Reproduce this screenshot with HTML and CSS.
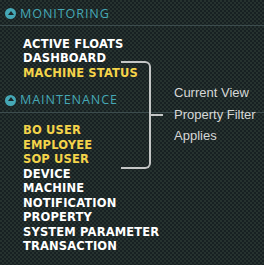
FILE: index.html
```html
<!DOCTYPE html>
<html lang="en">
<head>
    <meta charset="UTF-8">
    <title>Menu</title>
    <link rel="stylesheet" href="styles.css">
</head>
<body>
    <div class="menu">
        <div class="section">
            <h3 class="section-title"><span class="toggle"></span>MONITORING</h3>
            <ul class="items">
                <li>ACTIVE FLOATS</li>
                <li>DASHBOARD</li>
                <li class="hl">MACHINE STATUS</li>
            </ul>
        </div>
        <div class="section">
            <h3 class="section-title"><span class="toggle"></span>MAINTENANCE</h3>
            <ul class="items">
                <li class="hl">BO USER</li>
                <li class="hl">EMPLOYEE</li>
                <li class="hl">SOP USER</li>
                <li>DEVICE</li>
                <li>MACHINE</li>
                <li>NOTIFICATION</li>
                <li>PROPERTY</li>
                <li>SYSTEM PARAMETER</li>
                <li>TRANSACTION</li>
            </ul>
        </div>

        <!-- annotation bracket -->
        <div class="bracket"></div>
        <div class="tick"></div>
        <div class="note">
            <p>Current View</p>
            <p>Property Filter</p>
            <p>Applies</p>
        </div>
    </div>
</body>
</html>
```

FILE: styles.css
```css
html, body {
    margin: 0;
    padding: 0;
}

body {
    width: 264px;
    height: 265px;
    overflow: hidden;
    background-color: #1d2729;
    background-image: repeating-conic-gradient(#172022 0 25%, #26322f 0 50%);
    background-size: 4px 4px;
}

.menu {
    position: relative;
    height: 265px;
}

.section-title {
    margin: 0;
    height: 12.5px;
    padding: 7.5px 0 5px 5px;
    display: flex;
    align-items: center;
    font-family: "Open Sans", "DejaVu Sans", sans-serif;
    font-weight: normal;
    font-size: 12.6px;
    letter-spacing: 0.9px;
    color: #45a8b6;
    border-bottom: 1px solid #3c4c4e;
    line-height: 12.5px;
}

.toggle {
    width: 11px;
    height: 11px;
    border-radius: 50%;
    background: #45a8b6;
    margin-right: 4px;
    position: relative;
}

.toggle::after {
    content: "";
    position: absolute;
    left: 2.5px;
    top: 2.5px;
    border-left: 3px solid transparent;
    border-right: 3px solid transparent;
    border-bottom: 4px solid #1b2527;
}

.items {
    list-style: none;
    margin: 0;
    padding: 10.5px 0 6.5px 23px;
    font-family: "DejaVu Sans", Verdana, sans-serif;
    font-weight: bold;
    font-size: 11.5px;
    letter-spacing: 0.15px;
    line-height: 14.5px;
    color: #ffffff;
}

.items li.hl {
    color: #f4d44a;
}

.bracket {
    position: absolute;
    left: 121px;
    top: 61px;
    width: 28px;
    height: 104px;
    border: 2px solid #c4c6c6;
    border-left: none;
    border-radius: 0 6px 6px 0;
}

.tick {
    position: absolute;
    left: 151px;
    top: 114px;
    width: 12px;
    height: 2px;
    background: #c4c6c6;
}

.note {
    position: absolute;
    left: 174px;
    top: 82px;
    font-family: "Liberation Sans", Arial, sans-serif;
    font-size: 13px;
    color: #d6d8d8;
}

.note p {
    margin: 0;
    line-height: 21.5px;
}
```
